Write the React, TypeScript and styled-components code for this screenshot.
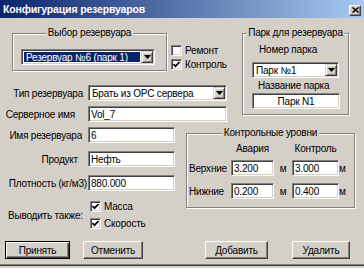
import styled, { createGlobalStyle, css } from 'styled-components';

const GlobalStyle = createGlobalStyle`
  html, body {
    margin: 0;
    padding: 0;
    background: #d4d0c8;
  }
  body {
    font-family: "Liberation Sans", Arial, sans-serif;
    font-size: 10px;
    letter-spacing: -0.2px;
    color: #000;
  }
`;

const sunken = css`
  border: 1px solid;
  border-color: #808080 #fff #fff #808080;
  box-shadow: inset 1px 1px 0 #404040, inset -1px -1px 0 #d4d0c8;
`;

const raised = css`
  border: 1px solid;
  border-color: #fff #404040 #404040 #fff;
  box-shadow: inset -1px -1px 0 #808080, inset 1px 1px 0 #d4d0c8;
`;

const Window = styled.div`
  width: 364px;
  height: 265px;
  background: #d4d0c8;
  border-bottom: 1px solid #404040;
  box-shadow: inset 0 -1px 0 #808080;
  display: flex;
  flex-direction: column;
`;

const TitleBar = styled.div`
  flex: none;
  height: 18px;
  display: flex;
  align-items: center;
  justify-content: space-between;
  padding: 0 3px 0 3px;
  background: linear-gradient(to right, #0a246a, #a6caf0);
`;

const TitleText = styled.span`
  color: #fff;
  font-size: 10.5px;
  font-weight: bold;
  letter-spacing: -0.15px;
`;

const CloseButton = styled.div`
  box-sizing: border-box;
  width: 12px;
  height: 11px;
  margin-top: 2px;
  background: #d4d0c8;
  ${raised}
  display: flex;
  align-items: center;
  justify-content: center;
`;

const Body = styled.div`
  flex: 1;
  padding-top: 15px;
  display: flex;
  flex-direction: column;
`;

const Section = styled.div<{ $mt?: number }>`
  display: flex;
  align-items: flex-start;
  margin-top: ${(p) => p.$mt ?? 0}px;
`;

const Column = styled.div<{ $w: number }>`
  flex: none;
  width: ${(p) => p.$w}px;
  display: flex;
  flex-direction: column;
`;

const SelectRow = styled.div`
  display: flex;
  align-items: flex-start;
`;

const Group = styled.div<{ $w: number; $h: number; $ml?: number; $mt?: number; $pad: string }>`
  position: relative;
  flex: none;
  box-sizing: border-box;
  width: ${(p) => p.$w}px;
  height: ${(p) => p.$h}px;
  margin-left: ${(p) => p.$ml ?? 0}px;
  margin-top: ${(p) => p.$mt ?? 0}px;
  padding: ${(p) => p.$pad};
  border: 1px solid #808080;
  box-shadow: inset 1px 1px 0 #fff, 1px 1px 0 #fff;
`;

const Caption = styled.span`
  position: absolute;
  top: -7px;
  left: 50%;
  transform: translateX(-50%);
  padding: 0 2px;
  background: #d4d0c8;
  line-height: 12px;
  white-space: nowrap;
`;

const Combo = styled.div<{ $w: number; $mt?: number }>`
  box-sizing: border-box;
  width: ${(p) => p.$w}px;
  height: 16px;
  margin-top: ${(p) => p.$mt ?? 0}px;
  padding: 1px;
  background: #fff;
  ${sunken}
  display: flex;
`;

const ComboText = styled.div<{ $selected?: boolean }>`
  flex: 1;
  display: flex;
  align-items: center;
  padding-left: 2px;
  margin: ${(p) => (p.$selected ? '1px' : '0')};
  background: ${(p) => (p.$selected ? '#0a246a' : 'transparent')};
  color: ${(p) => (p.$selected ? '#fff' : '#000')};
  white-space: nowrap;
  overflow: hidden;
`;

const ArrowButton = styled.div`
  flex: none;
  box-sizing: border-box;
  width: 12px;
  height: 12px;
  background: #d4d0c8;
  border: 1px solid;
  border-color: #d4d0c8 #404040 #404040 #d4d0c8;
  box-shadow: inset 1px 1px 0 #fff, inset -1px -1px 0 #808080;
  display: flex;
  align-items: center;
  justify-content: center;
`;

const Field = styled.div<{ $w: number; $center?: boolean; $mt?: number }>`
  box-sizing: border-box;
  width: ${(p) => p.$w}px;
  height: 16px;
  margin-top: ${(p) => p.$mt ?? 0}px;
  padding: 0 2px;
  background: #fff;
  ${sunken}
  display: flex;
  align-items: center;
  justify-content: ${(p) => (p.$center ? 'center' : 'flex-start')};
  white-space: nowrap;
  overflow: hidden;
`;

const CheckList = styled.div<{ $ml?: number; $mt?: number; $gap: number }>`
  display: flex;
  flex-direction: column;
  gap: ${(p) => p.$gap}px;
  margin-left: ${(p) => p.$ml ?? 0}px;
  margin-top: ${(p) => p.$mt ?? 0}px;
`;

const CheckRow = styled.div`
  display: flex;
  align-items: center;
  gap: 3px;
  height: 11px;
  white-space: nowrap;
`;

const CheckBox = styled.span`
  flex: none;
  box-sizing: border-box;
  width: 11px;
  height: 11px;
  background: #fff;
  ${sunken}
  display: flex;
  align-items: center;
  justify-content: center;
`;

const FormRow = styled.div<{ $mt?: number }>`
  display: grid;
  grid-template-columns: 88px max-content;
  align-items: center;
  margin-top: ${(p) => p.$mt ?? 0}px;
`;

const FieldLabel = styled.span<{ $pr: number }>`
  text-align: right;
  padding-right: ${(p) => p.$pr}px;
  white-space: nowrap;
`;

const PlainLabel = styled.div<{ $ml?: number; $mt?: number }>`
  margin-left: ${(p) => p.$ml ?? 0}px;
  margin-top: ${(p) => p.$mt ?? 0}px;
  line-height: 12px;
  white-space: nowrap;
`;

const ExtrasRow = styled.div`
  display: grid;
  grid-template-columns: 90px max-content;
  align-items: center;
  margin-top: 10px;
`;

const ExtrasLabel = styled.span`
  padding-left: 8px;
  white-space: nowrap;
`;

const LevelsGrid = styled.div`
  display: grid;
  grid-template-columns: 42px 43px 18px 47px 12px;
  grid-template-rows: 16px 20px 23px;
  align-items: end;
`;

const LevelText = styled.span<{ $justify?: string }>`
  justify-self: ${(p) => p.$justify ?? 'start'};
  line-height: 14px;
  white-space: nowrap;
`;

const ButtonRow = styled.div`
  display: flex;
  margin-top: 12px;
`;

const Button = styled.div<{ $w: number; $ml: number; $default?: boolean }>`
  box-sizing: border-box;
  width: ${(p) => p.$w}px;
  height: 18px;
  margin-left: ${(p) => p.$ml}px;
  background: #d4d0c8;
  ${(p) =>
    p.$default
      ? css`
          border: 1px solid #000;
          box-shadow: inset 1px 1px 0 #fff, inset -1px -1px 0 #404040, inset -2px -2px 0 #808080;
        `
      : raised}
  display: flex;
  align-items: center;
  justify-content: center;
  white-space: nowrap;
`;

function DropArrow() {
  return (
    <ArrowButton>
      <svg width="7" height="4" viewBox="0 0 7 4">
        <polygon points="0,0 7,0 3.5,4" fill="#000" />
      </svg>
    </ArrowButton>
  );
}

function Check({ label, checked }: { label: string; checked?: boolean }) {
  return (
    <CheckRow>
      <CheckBox>
        {checked && (
          <svg width="7" height="7" viewBox="0 0 7 7">
            <polyline points="0.5,3 2.5,5.2 6.5,1" fill="none" stroke="#000" strokeWidth="1.7" />
          </svg>
        )}
      </CheckBox>
      {label}
    </CheckRow>
  );
}

export default function App() {
  return (
    <>
      <GlobalStyle />
      <Window>
        <TitleBar>
          <TitleText>Конфигурация резервуаров</TitleText>
          <CloseButton>
            <svg width="7" height="6" viewBox="0 0 7 6">
              <path d="M0.5 0.5 L6.5 5.5 M6.5 0.5 L0.5 5.5" stroke="#000" strokeWidth="1.5" />
            </svg>
          </CloseButton>
        </TitleBar>
        <Body>
          <Section>
            <Column $w={230}>
              <SelectRow>
                <Group $w={155} $h={38} $ml={12} $pad="15px 0 0 8px">
                  <Caption>Выбор резервуара</Caption>
                  <Combo $w={134}>
                    <ComboText $selected>Резервуар №6 (парк 1)</ComboText>
                    <DropArrow />
                  </Combo>
                </Group>
                <CheckList $ml={4} $mt={12} $gap={3}>
                  <Check label="Ремонт" />
                  <Check label="Контроль" checked />
                </CheckList>
              </SelectRow>
              <FormRow $mt={14}>
                <FieldLabel $pr={5}>Тип резервуара</FieldLabel>
                <Combo $w={139}>
                  <ComboText>Брать из OPC сервера</ComboText>
                  <DropArrow />
                </Combo>
              </FormRow>
              <FormRow $mt={5}>
                <FieldLabel $pr={13}>Серверное имя</FieldLabel>
                <Field $w={139}>Vol_7</Field>
              </FormRow>
            </Column>
            <Group $w={107} $h={82} $ml={12} $pad="10px 0 0 9px">
              <Caption>Парк для резервуара</Caption>
              <PlainLabel $ml={7}>Номер парка</PlainLabel>
              <Combo $w={87} $mt={6}>
                <ComboText>Парк №1</ComboText>
                <DropArrow />
              </Combo>
              <PlainLabel $ml={6} $mt={2}>Название парка</PlainLabel>
              <Field $w={88} $center $mt={1}>
                Парк N1
              </Field>
            </Group>
          </Section>

          <Section $mt={5}>
            <Column $w={186}>
              <FormRow>
                <FieldLabel $pr={6}>Имя резервуара</FieldLabel>
                <Field $w={87}>6</Field>
              </FormRow>
              <FormRow $mt={8}>
                <FieldLabel $pr={10}>Продукт</FieldLabel>
                <Field $w={87}>Нефть</Field>
              </FormRow>
              <FormRow $mt={8}>
                <FieldLabel $pr={1}>Плотность (кг/м3)</FieldLabel>
                <Field $w={87}>880.000</Field>
              </FormRow>
              <ExtrasRow>
                <ExtrasLabel>Выводить также:</ExtrasLabel>
                <CheckList $gap={6}>
                  <Check label="Масса" checked />
                  <Check label="Скорость" checked />
                </CheckList>
              </ExtrasRow>
            </Column>
            <Group $w={169} $h={75} $mt={6} $pad="6px 0 0 2px">
              <Caption>Контрольные уровни</Caption>
              <LevelsGrid>
                <span />
                <LevelText $justify="center">Авария</LevelText>
                <span />
                <LevelText $justify="center">Контроль</LevelText>
                <span />

                <LevelText>Верхние</LevelText>
                <Field $w={43}>3.200</Field>
                <LevelText $justify="center">м</LevelText>
                <Field $w={47}>3.000</Field>
                <LevelText>м</LevelText>

                <LevelText>Нижние</LevelText>
                <Field $w={43}>0.200</Field>
                <LevelText $justify="center">м</LevelText>
                <Field $w={47}>0.400</Field>
                <LevelText>м</LevelText>
              </LevelsGrid>
            </Group>
          </Section>

          <ButtonRow>
            <Button $w={65} $ml={5} $default>
              Принять
            </Button>
            <Button $w={60} $ml={13}>
              Отменить
            </Button>
            <Button $w={63} $ml={62}>
              Добавить
            </Button>
            <Button $w={58} $ml={24}>
              Удалить
            </Button>
          </ButtonRow>
        </Body>
      </Window>
    </>
  );
}
